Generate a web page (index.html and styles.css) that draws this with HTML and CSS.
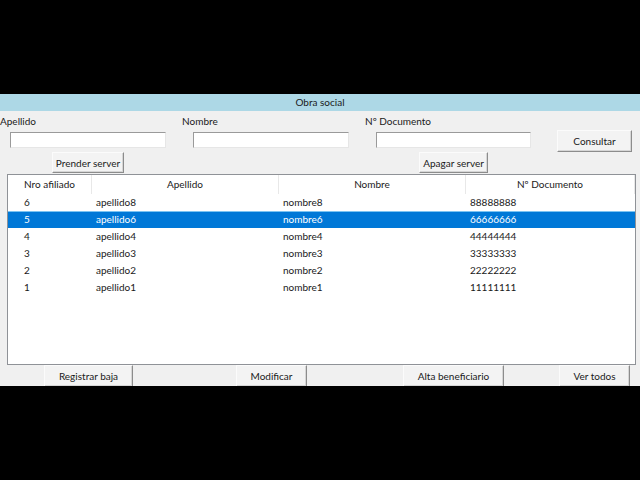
FILE: index.html
```html
<!DOCTYPE html>
<html lang="es">
<head>
    <meta charset="UTF-8">
    <title>Obra social</title>
    <link rel="stylesheet" href="styles.css">
</head>
<body>
    <div class="window">
        <div class="title-bar">Obra social</div>

        <div class="search">
            <div class="field field-apellido">
                <label for="apellido">Apellido</label>
                <input type="text" id="apellido">
            </div>
            <div class="field field-nombre">
                <label for="nombre">Nombre</label>
                <input type="text" id="nombre">
            </div>
            <div class="field field-documento">
                <label for="documento">Nº Documento</label>
                <input type="text" id="documento">
            </div>
            <button class="btn btn-consultar">Consultar</button>
        </div>

        <div class="server-row">
            <button class="btn btn-prender">Prender server</button>
            <button class="btn btn-apagar">Apagar server</button>
        </div>

        <div class="list">
            <div class="list-row list-head">
                <div class="col col-nro">Nro afiliado</div>
                <div class="col col-ape">Apellido</div>
                <div class="col col-nom">Nombre</div>
                <div class="col col-doc">Nº Documento</div>
            </div>
            <div class="list-row">
                <div class="col col-nro">6</div>
                <div class="col col-ape">apellido8</div>
                <div class="col col-nom">nombre8</div>
                <div class="col col-doc">88888888</div>
            </div>
            <div class="list-row selected">
                <div class="col col-nro">5</div>
                <div class="col col-ape">apellido6</div>
                <div class="col col-nom">nombre6</div>
                <div class="col col-doc">66666666</div>
            </div>
            <div class="list-row">
                <div class="col col-nro">4</div>
                <div class="col col-ape">apellido4</div>
                <div class="col col-nom">nombre4</div>
                <div class="col col-doc">44444444</div>
            </div>
            <div class="list-row">
                <div class="col col-nro">3</div>
                <div class="col col-ape">apellido3</div>
                <div class="col col-nom">nombre3</div>
                <div class="col col-doc">33333333</div>
            </div>
            <div class="list-row">
                <div class="col col-nro">2</div>
                <div class="col col-ape">apellido2</div>
                <div class="col col-nom">nombre2</div>
                <div class="col col-doc">22222222</div>
            </div>
            <div class="list-row">
                <div class="col col-nro">1</div>
                <div class="col col-ape">apellido1</div>
                <div class="col col-nom">nombre1</div>
                <div class="col col-doc">11111111</div>
            </div>
        </div>

        <div class="actions">
            <button class="btn btn-baja">Registrar baja</button>
            <button class="btn btn-modificar">Modificar</button>
            <button class="btn btn-alta">Alta beneficiario</button>
            <button class="btn btn-todos">Ver todos</button>
        </div>
    </div>
</body>
</html>
```

FILE: styles.css
```css
/* Base */
* {
    box-sizing: border-box;
    margin: 0;
    padding: 0;
}

body {
    background: #000;
    padding-top: 94px;
    font-family: 'Segoe UI', Lato, 'Open Sans', sans-serif;
    font-size: 10px;
    color: #1a1a1a;
}

.window {
    width: 640px;
    height: 292px;
    background: #f0f0f0;
    overflow: hidden;
}

.title-bar {
    height: 17px;
    line-height: 17px;
    background: #add8e6;
    text-align: center;
}

/* Search fields */
.search {
    display: flex;
    align-items: flex-start;
    height: 41px;
}

.field label {
    display: block;
    height: 14px;
    line-height: 14px;
    margin-top: 3px;
}

.field input {
    display: block;
    height: 16px;
    margin-top: 4px;
    background: #fff;
    border: 1px solid;
    border-color: #9a9a9a #e6e6e6 #e6e6e6 #9a9a9a;
    outline: none;
}

.field-apellido { width: 182px; }
.field-apellido input { margin-left: 10px; width: 156px; }

.field-nombre { width: 183px; }
.field-nombre input { margin-left: 11px; width: 156px; }

.field-documento { width: 192px; }
.field-documento input { margin-left: 11px; width: 155px; }

/* Buttons */
.btn {
    height: 22px;
    font: inherit;
    color: #1a1a1a;
    background: #f3f3f3;
    border: 1px solid;
    border-color: #fbfbfb #8c8c8c #8c8c8c #fbfbfb;
    box-shadow: inset -1px -1px 0 #d6d6d6;
}

.btn-consultar {
    width: 75px;
    margin-top: 19px;
}

.server-row {
    display: flex;
    height: 21px;
}

.server-row .btn {
    height: 21px;
}

.btn-prender {
    width: 72px;
    margin-left: 52px;
}

.btn-apagar {
    width: 69px;
    margin-left: 295px;
}

/* Afiliados list */
.list {
    margin: 1px 0 0 7px;
    width: 629px;
    height: 191px;
    background: #fff;
    border: 1px solid #8f9297;
}

.list-row {
    display: flex;
    height: 17px;
    line-height: 17px;
}

.list-head {
    height: 19px;
    line-height: 19px;
}

.list-head .col {
    text-align: center;
    padding: 0;
    border-right: 1px solid #e8e8e8;
}

.col {
    padding-left: 4px;
    white-space: nowrap;
}

.col-nro { width: 84px; padding-left: 16px; }
.col-ape { width: 187px; }
.col-nom { width: 187px; }
.col-doc { width: 169px; }

.list-row.selected {
    background: #0078d7;
    color: #fff;
    box-shadow: inset 0 1px 0 #7cc4f2;
}

/* Bottom actions */
.actions {
    display: flex;
}

.btn-baja {
    width: 89px;
    margin-left: 44px;
}

.btn-modificar {
    width: 71px;
    margin-left: 103px;
}

.btn-alta {
    width: 101px;
    margin-left: 96px;
}

.btn-todos {
    width: 71px;
    margin-left: 55px;
}
```
